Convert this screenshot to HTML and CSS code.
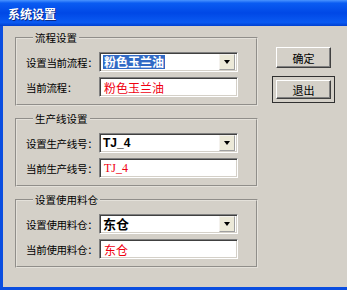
FILE: index.html
```html
<!DOCTYPE html>
<html lang="zh-CN">
<head>
    <meta charset="UTF-8">
    <title>系统设置</title>
    <link rel="stylesheet" href="styles.css">
</head>
<body>
    <div class="window">
        <div class="titlebar">系统设置</div>
        <div class="client">
            <div class="groups">
                <fieldset class="group">
                    <legend>流程设置</legend>
                    <div class="row">
                        <span class="label">设置当前流程：</span>
                        <div class="combo"><span class="value selected">粉色玉兰油</span><span class="drop"></span></div>
                    </div>
                    <div class="row">
                        <span class="label">当前流程：</span>
                        <div class="textbox">粉色玉兰油</div>
                    </div>
                </fieldset>
                <fieldset class="group">
                    <legend>生产线设置</legend>
                    <div class="row">
                        <span class="label">设置生产线号：</span>
                        <div class="combo"><span class="value latin">TJ_4</span><span class="drop"></span></div>
                    </div>
                    <div class="row">
                        <span class="label">当前生产线号：</span>
                        <div class="textbox latin-red">TJ_4</div>
                    </div>
                </fieldset>
                <fieldset class="group">
                    <legend>设置使用料仓</legend>
                    <div class="row">
                        <span class="label">设置使用料仓：</span>
                        <div class="combo"><span class="value big">东仓</span><span class="drop"></span></div>
                    </div>
                    <div class="row">
                        <span class="label">当前使用料仓：</span>
                        <div class="textbox">东仓</div>
                    </div>
                </fieldset>
            </div>
            <div class="buttons">
                <button class="btn">确定</button>
                <div class="default-frame"><button class="btn btn-inner">退出</button></div>
            </div>
        </div>
    </div>
</body>
</html>
```

FILE: styles.css
```css
body {
    margin: 0;
    font-family: "Noto Sans CJK SC", "Liberation Sans", sans-serif;
    font-size: 10px;
    color: #000;
}
.window {
    width: 347px;
    height: 290px;
    display: flex;
    flex-direction: column;
    overflow: hidden;
}
.titlebar {
    height: 26px;
    flex: none;
    background: linear-gradient(to bottom, #4a94ff 0%, #0a5cf2 12%, #0048e6 50%, #0a5af2 86%, #0040d0 100%);
    color: #fff;
    font-weight: bold;
    font-size: 12px;
    line-height: 28px;
    padding-left: 8px;
    text-shadow: 1px 1px 0 #0a2a88;
}
.client {
    flex: 1;
    display: flex;
    background-color: #d4d0c8;
    border-left: 3px solid #0a4ee0;
    border-bottom: 3px solid #0a4ee0;
    padding: 5px 0 0 12px;
}
.groups {
    display: flex;
    flex-direction: column;
    gap: 6px;
    width: 243px;
}
.group {
    margin: 0;
    border: 2px groove #e4e1da;
    padding: 7px 18px 7px 9px;
    min-width: 0;
}
.group legend {
    padding: 0 2px;
    margin-left: 7px;
    line-height: 14px;
    font-size: 10.5px;
}
.row {
    display: flex;
    align-items: center;
    height: 20px;
}
.row + .row {
    margin-top: 5px;
}
.label {
    width: 73px;
    flex: none;
    white-space: nowrap;
    font-size: 10.5px;
    letter-spacing: -0.3px;
}
.combo, .textbox {
    width: 139px;
    height: 20px;
    box-sizing: border-box;
    background: #fff;
    border: 1px solid;
    border-color: #808080 #fff #fff #808080;
    box-shadow: inset 1px 1px 0 #404040, inset -1px -1px 0 #d4d0c8;
    display: flex;
    align-items: center;
}
.combo {
    justify-content: space-between;
    padding: 2px 2px 2px 3px;
}
.value {
    font-weight: bold;
    font-size: 12px;
    line-height: 14px;
}
.selected {
    background: #316ac5;
    color: #fff;
    padding: 0 1px;
}
.latin {
    font-family: "Liberation Sans", sans-serif;
    font-size: 12px;
}
.big {
    font-size: 13px;
}
.drop {
    width: 16px;
    height: 16px;
    box-sizing: border-box;
    background: #ece9d8;
    border: 1px solid;
    border-color: #f4f2ee #a0a0a0 #a0a0a0 #f4f2ee;
    position: relative;
}
.drop::after {
    content: "";
    position: absolute;
    left: 4px;
    top: 5px;
    border-left: 3px solid transparent;
    border-right: 3px solid transparent;
    border-top: 4px solid #000;
}
.textbox {
    color: #f00010;
    font-size: 12px;
    padding-left: 4px;
}
.latin-red {
    font-family: "Liberation Serif", serif;
    font-size: 12px;
}
.buttons {
    display: flex;
    flex-direction: column;
    align-items: flex-start;
    padding: 16px 0 0 18px;
}
.btn {
    width: 55px;
    height: 21px;
    margin: 0;
    padding: 0;
    background: #d4d0c8;
    border: 1px solid;
    border-color: #fff #404040 #404040 #fff;
    box-shadow: inset -1px -1px 0 #808080;
    font-family: "Noto Sans CJK SC", sans-serif;
    font-size: 11px;
    color: #000;
}
.default-frame {
    margin: 8px 0 0 -4px;
    border: 1px solid #303030;
    padding: 3px;
}
.btn-inner {
    height: 19px;
}
```
